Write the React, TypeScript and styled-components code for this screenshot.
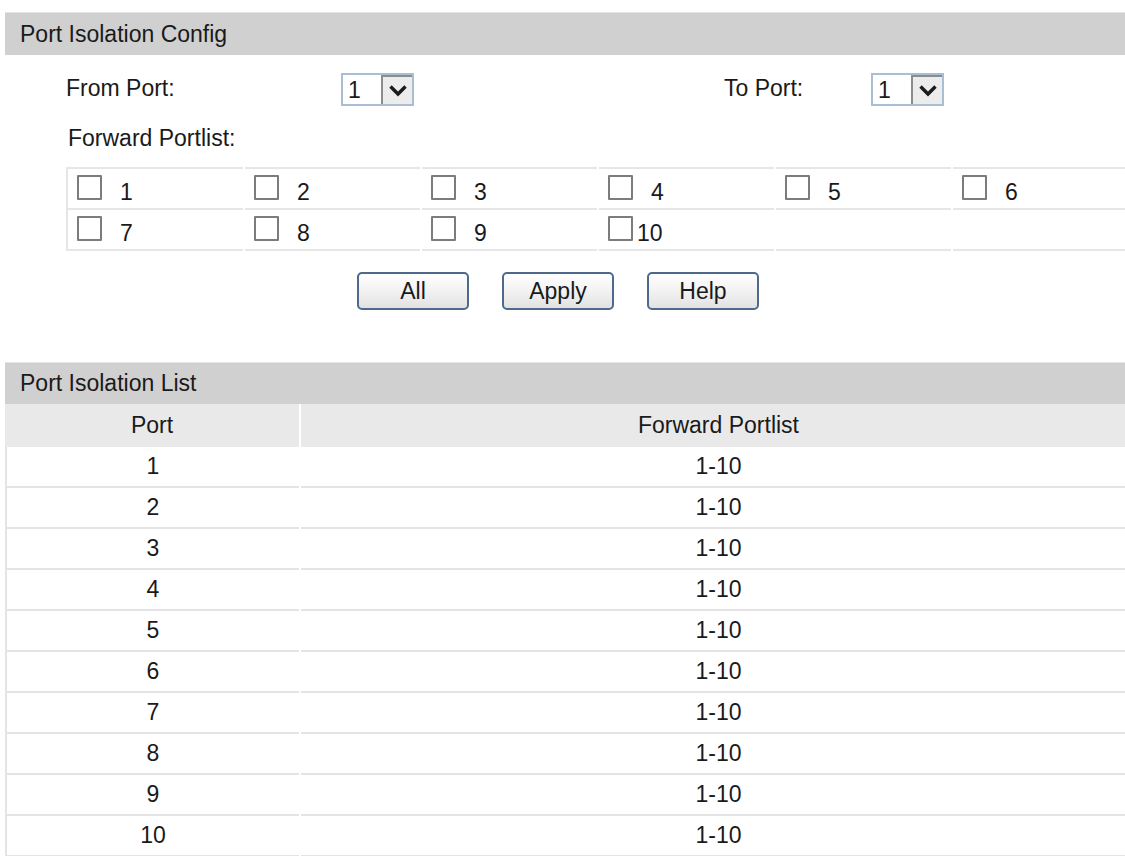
import React from "react";
import styled, { createGlobalStyle } from "styled-components";

const PORTS = [1, 2, 3, 4, 5, 6, 7, 8, 9, 10];

const GlobalStyle = createGlobalStyle`
  html, body {
    margin: 0;
    padding: 0;
    overflow: hidden;
    background: #fff;
  }
  body {
    font-family: "Liberation Sans", Arial, sans-serif;
    font-size: 23px;
    color: #1a1a1a;
  }
`;

const Chevron = () => (
  <svg width="20" height="13" viewBox="0 0 20 13">
    <path d="M2.5 2.5 L10 10 L17.5 2.5" fill="none" stroke="#1b1b1b" strokeWidth="3.4" />
  </svg>
);

const PortSelect = ({ value }: { value: number }) => (
  <SelectBox>
    <SelectValue>{value}</SelectValue>
    <SelectArrow>
      <Chevron />
    </SelectArrow>
  </SelectBox>
);

const App = () => {
  return (
    <Page>
      <GlobalStyle />

      {/* CONFIG */}
      <SectionBar>Port Isolation Config</SectionBar>
      <FieldRow>
        <FieldLabel>From Port:</FieldLabel>
        <PortSelect value={1} />
        <FieldLabel>To Port:</FieldLabel>
        <PortSelect value={1} />
      </FieldRow>
      <PortlistLabel>Forward Portlist:</PortlistLabel>
      <CheckGrid>
        {PORTS.map((p) => (
          <CheckCell key={p} $last={p > 6}>
            <Box />
            <CheckText $tight={p >= 10}>{p}</CheckText>
          </CheckCell>
        ))}
        <CheckCell $last />
        <CheckCell $last />
      </CheckGrid>
      <ButtonRow>
        <Button>All</Button>
        <Button>Apply</Button>
        <Button>Help</Button>
      </ButtonRow>

      {/* LIST */}
      <ListBar>Port Isolation List</ListBar>
      <ListTable>
        <HeadCell>Port</HeadCell>
        <HeadCell>Forward Portlist</HeadCell>
        {PORTS.map((p) => (
          <React.Fragment key={p}>
            <DataCell>{p}</DataCell>
            <DataCell>1-10</DataCell>
          </React.Fragment>
        ))}
      </ListTable>
    </Page>
  );
};

// STYLED COMPONENTS //
const Page = styled.div`
  width: 1131px;
  padding: 12px 0 0 5px;
`;

const SectionBar = styled.div`
  height: 42px;
  background: #d0d0d0;
  border-top: 1px solid #e4e4e4;
  display: flex;
  align-items: center;
  padding-left: 15px;
`;

const ListBar = styled(SectionBar)`
  margin-top: 52px;
  height: 41px;
`;

const FieldRow = styled.div`
  display: grid;
  grid-template-columns: 275px 383px 147px auto;
  align-items: center;
  margin-top: 17px;
  padding-left: 61px;
  height: 34px;
`;

const FieldLabel = styled.div`
  line-height: 34px;
  margin-top: -2px;
`;

const SelectBox = styled.div`
  width: 73px;
  height: 33px;
  box-sizing: border-box;
  border: 2px solid #a9bdd4;
  display: flex;
  background: #fff;
`;

const SelectValue = styled.div`
  width: 33px;
  padding-left: 5px;
  line-height: 30px;
`;

const SelectArrow = styled.div`
  flex: 1;
  background: #ececec;
  border-left: 2px solid #8c8c8c;
  border-top: 2px solid #8c8c8c;
  display: flex;
  align-items: center;
  justify-content: center;
`;

const PortlistLabel = styled.div`
  margin: 19px 0 0 63px;
  height: 27px;
  line-height: 27px;
`;

const CheckGrid = styled.div`
  display: grid;
  grid-template-columns: repeat(6, 175px);
  column-gap: 2px;
  margin: 15px 0 0 61px;
  border-left: 2px solid #e6e6e6;
`;

const CheckCell = styled.div<{ $last?: boolean }>`
  height: 39px;
  border-top: 2px solid #e6e6e6;
  border-bottom: ${(p) => (p.$last ? "2px solid #e6e6e6" : "0")};
  display: flex;
  align-items: center;
  padding-left: 9px;
`;

const Box = styled.span`
  width: 21px;
  height: 21px;
  border: 2px solid #7c7c7c;
  border-radius: 1px;
  background: #fff;
  flex: none;
  margin-top: -2px;
`;

const CheckText = styled.span<{ $tight?: boolean }>`
  margin-left: ${(p) => (p.$tight ? "4px" : "18px")};
  line-height: 1;
  padding-top: 8px;
`;

const ButtonRow = styled.div`
  display: flex;
  justify-content: center;
  gap: 33px;
  margin-top: 21px;
  padding-right: 25px;
`;

const Button = styled.button`
  width: 112px;
  height: 38px;
  border: 2px solid #4d6a8c;
  border-radius: 5px;
  background: linear-gradient(#ffffff, #f2f2f2 50%, #e2e2e2);
  font-family: "Liberation Sans", Arial, sans-serif;
  font-size: 23px;
  color: #1a1a1a;
  padding: 0;
`;

const ListTable = styled.div`
  display: grid;
  grid-template-columns: 294px 835px;
  column-gap: 2px;
`;

const HeadCell = styled.div`
  height: 43px;
  background: #e9e9e9;
  display: flex;
  align-items: center;
  justify-content: center;
`;

const DataCell = styled.div`
  height: 39px;
  border-bottom: 2px solid #e4e4e4;
  display: flex;
  align-items: center;
  justify-content: center;
  &:nth-child(odd) {
    border-left: 2px solid #e4e4e4;
  }
`;

export default App;
